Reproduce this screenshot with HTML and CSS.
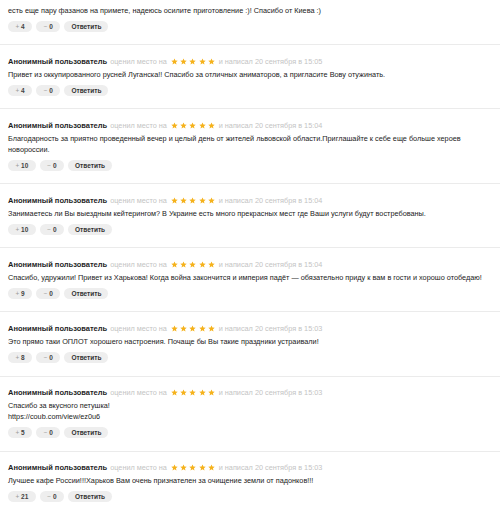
FILE: index.html
```html
<!DOCTYPE html>
<html lang="ru">
<head>
<meta charset="utf-8">
<link rel="stylesheet" href="styles.css">
</head>
<body>
<svg width="0" height="0" class="defs">
  <defs>
    <symbol id="star" viewBox="0 0 24 24"><path d="M12 1.5l3.1 7.2 7.9.7-6 5.2 1.8 7.7L12 18.2 5.2 22.3 7 14.6 1 9.4l7.9-.7z"/></symbol>
  </defs>
</svg>
<div class="list">
  <div class="comment first">
    <p class="text">есть еще пару фазанов на примете, надеюсь осилите приготовление :)! Спасибо от Киева :)</p>
    <div class="actions"><span class="btn vote"><i>+</i> 4</span><span class="btn vote"><i>−</i> 0</span><span class="btn reply">Ответить</span></div>
  </div>
  <div class="comment">
    <div class="meta"><b class="author">Анонимный пользователь</b><span class="muted">оценил место на</span><span class="stars"><svg><use href="#star"/></svg><svg><use href="#star"/></svg><svg><use href="#star"/></svg><svg><use href="#star"/></svg><svg><use href="#star"/></svg></span><span class="muted">и написал 20 сентября в 15:05</span></div>
    <p class="text">Привет из оккупированного русней Луганска!! Спасибо за отличных аниматоров, а пригласите Вову отужинать.</p>
    <div class="actions"><span class="btn vote"><i>+</i> 4</span><span class="btn vote"><i>−</i> 0</span><span class="btn reply">Ответить</span></div>
  </div>
  <div class="comment">
    <div class="meta"><b class="author">Анонимный пользователь</b><span class="muted">оценил место на</span><span class="stars"><svg><use href="#star"/></svg><svg><use href="#star"/></svg><svg><use href="#star"/></svg><svg><use href="#star"/></svg><svg><use href="#star"/></svg></span><span class="muted">и написал 20 сентября в 15:04</span></div>
    <p class="text">Благодарность за приятно проведенный вечер и целый день от жителей львовской области.Приглашайте к себе еще больше херoев<br>новороссии.</p>
    <div class="actions"><span class="btn vote"><i>+</i> 10</span><span class="btn vote"><i>−</i> 0</span><span class="btn reply">Ответить</span></div>
  </div>
  <div class="comment">
    <div class="meta"><b class="author">Анонимный пользователь</b><span class="muted">оценил место на</span><span class="stars"><svg><use href="#star"/></svg><svg><use href="#star"/></svg><svg><use href="#star"/></svg><svg><use href="#star"/></svg><svg><use href="#star"/></svg></span><span class="muted">и написал 20 сентября в 15:04</span></div>
    <p class="text">Занимаетесь ли Вы выездным кейтерингом? В Украине есть много прекрасных мест где Ваши услуги будут востребованы.</p>
    <div class="actions"><span class="btn vote"><i>+</i> 10</span><span class="btn vote"><i>−</i> 0</span><span class="btn reply">Ответить</span></div>
  </div>
  <div class="comment">
    <div class="meta"><b class="author">Анонимный пользователь</b><span class="muted">оценил место на</span><span class="stars"><svg><use href="#star"/></svg><svg><use href="#star"/></svg><svg><use href="#star"/></svg><svg><use href="#star"/></svg><svg><use href="#star"/></svg></span><span class="muted">и написал 20 сентября в 15:04</span></div>
    <p class="text">Спасибо, удружили! Привет из Харькова! Когда война закончится и империя падёт — обязательно приду к вам в гости и хорошо отобедаю!</p>
    <div class="actions"><span class="btn vote"><i>+</i> 9</span><span class="btn vote"><i>−</i> 0</span><span class="btn reply">Ответить</span></div>
  </div>
  <div class="comment">
    <div class="meta"><b class="author">Анонимный пользователь</b><span class="muted">оценил место на</span><span class="stars"><svg><use href="#star"/></svg><svg><use href="#star"/></svg><svg><use href="#star"/></svg><svg><use href="#star"/></svg><svg><use href="#star"/></svg></span><span class="muted">и написал 20 сентября в 15:03</span></div>
    <p class="text">Это прямо таки ОПЛОТ хорошего настроения. Почаще бы Вы такие праздники устраивали!</p>
    <div class="actions"><span class="btn vote"><i>+</i> 8</span><span class="btn vote"><i>−</i> 0</span><span class="btn reply">Ответить</span></div>
  </div>
  <div class="comment">
    <div class="meta"><b class="author">Анонимный пользователь</b><span class="muted">оценил место на</span><span class="stars"><svg><use href="#star"/></svg><svg><use href="#star"/></svg><svg><use href="#star"/></svg><svg><use href="#star"/></svg><svg><use href="#star"/></svg></span><span class="muted">и написал 20 сентября в 15:03</span></div>
    <p class="text">Спасибо за вкусного петушка!<br>https://coub.com/view/ez0u6</p>
    <div class="actions"><span class="btn vote"><i>+</i> 5</span><span class="btn vote"><i>−</i> 0</span><span class="btn reply">Ответить</span></div>
  </div>
  <div class="comment">
    <div class="meta"><b class="author">Анонимный пользователь</b><span class="muted">оценил место на</span><span class="stars"><svg><use href="#star"/></svg><svg><use href="#star"/></svg><svg><use href="#star"/></svg><svg><use href="#star"/></svg><svg><use href="#star"/></svg></span><span class="muted">и написал 20 сентября в 15:03</span></div>
    <p class="text">Лучшее кафе России!!!Харьков Вам очень признателен за очищение земли от падонков!!!</p>
    <div class="actions"><span class="btn vote"><i>+</i> 21</span><span class="btn vote"><i>−</i> 0</span><span class="btn reply">Ответить</span></div>
  </div>
</div>
</body>
</html>
```

FILE: styles.css
```css
html, body {
  margin: 0;
  padding: 0;
  background: #fff;
}
body {
  font-family: "Liberation Sans", Arial, sans-serif;
  font-size: 7.3px;
  color: #222;
  overflow: hidden;
}
.defs {
  position: absolute;
  width: 0;
  height: 0;
}
.list {
  display: flex;
  flex-direction: column;
}
.comment {
  padding: 8.5px 8px 12.6px;
  border-bottom: 1px solid #ebebeb;
}
.comment.first {
  padding-top: 4.5px;
}
.meta {
  display: flex;
  align-items: center;
  height: 15px;
  line-height: 15px;
  white-space: nowrap;
}
.author {
  font-weight: bold;
  font-size: 7.5px;
  color: #1e1e1e;
  margin-right: 3px;
}
.muted {
  color: #c4c4c4;
}
.stars {
  display: inline-flex;
  gap: 2.2px;
  margin: 0 4px;
}
.stars svg {
  width: 7px;
  height: 7px;
  fill: #f5b21c;
}
.text {
  margin: 0;
  line-height: 11px;
  color: #222;
}
.actions {
  display: flex;
  gap: 4px;
  margin-top: 5px;
}
.btn {
  height: 11px;
  line-height: 11px;
  border-radius: 6px;
  background: #eeeeee;
  font-size: 6.5px;
  font-weight: bold;
  color: #444;
}
.btn i {
  font-style: normal;
  font-weight: normal;
  color: #999;
}
.vote {
  padding: 0 7.5px;
}
.reply {
  padding: 0 7px;
  color: #333;
}
```
